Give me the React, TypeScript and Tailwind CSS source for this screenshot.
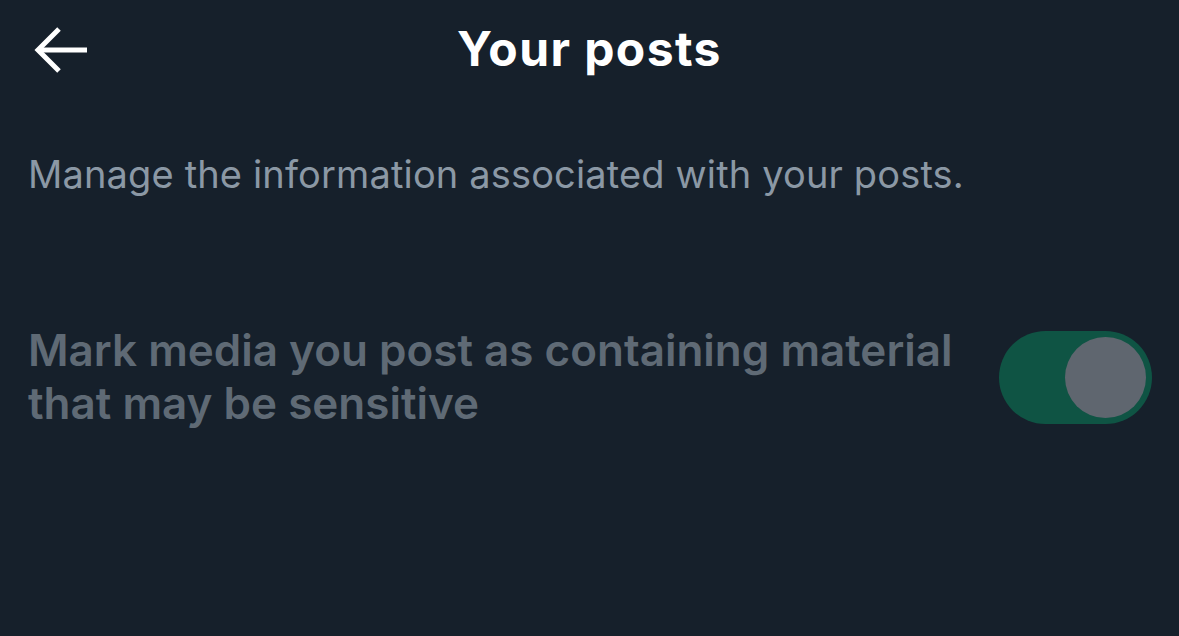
import React, { useState } from 'react';

const BackArrow: React.FC = () => (
  <svg width="56" height="48" viewBox="0 0 56 48" fill="none" stroke="white" strokeWidth="5" strokeLinecap="butt" strokeLinejoin="miter">
    <path d="M54 24H6" />
    <path d="M26 3L5 24L26 45" />
  </svg>
);

const App: React.FC = () => {
  const [sensitive, setSensitive] = useState(true);

  return (
    <div
      className="w-[1179px] h-[636px] bg-[#16202b] overflow-hidden"
      style={{ fontFamily: 'Inter, "Noto Sans", sans-serif' }}
    >
      {/* Header */}
      <div className="relative h-[106px] flex items-start justify-center pt-[19px]">
        <button className="absolute left-[33px] top-[26px]">
          <BackArrow />
        </button>
        <h1 className="text-[48px] leading-[60px] font-bold text-white tracking-[1.4px]">Your posts</h1>
      </div>

      {/* Description */}
      <p className="px-[28px] pt-[45px] text-[38px] leading-[46px] text-[#8b98a5] tracking-[0.15px]">
        Manage the information associated with your posts.
      </p>

      {/* Setting row */}
      <div className="flex items-center justify-between pl-[28px] pr-[27px] mt-[127px]">
        <span className="text-[44px] leading-[53px] font-semibold text-[#5f6a75] max-w-[940px]">
          Mark media you post as containing material that may be sensitive
        </span>
        <button
          onClick={() => setSensitive(!sensitive)}
          className={`w-[153px] h-[93px] shrink-0 rounded-full flex items-center px-[6px] ${
            sensitive ? 'bg-[#0f5444] justify-end' : 'bg-[#3a444f] justify-start'
          }`}
        >
          <span className="w-[81px] h-[81px] rounded-full bg-[#5f666f]" />
        </button>
      </div>
    </div>
  );
};

export default App;
